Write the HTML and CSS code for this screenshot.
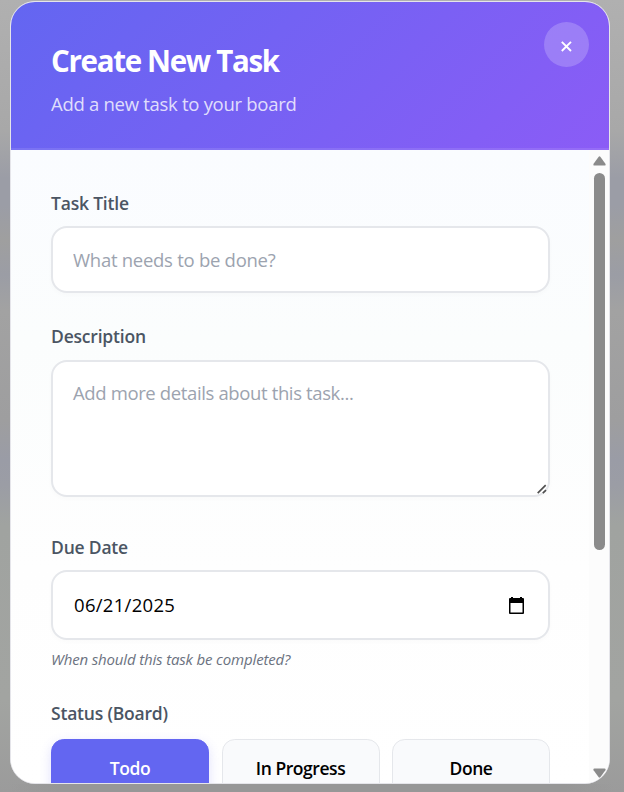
FILE: index.html
```html
<!DOCTYPE html>
<html lang="en">
<head>
<meta charset="utf-8">
<title>Create New Task</title>
<link rel="stylesheet" href="styles.css">
</head>
<body>
<section class="modal">
  <header class="modal-header">
    <div>
      <h1 class="modal-title">Create New Task</h1>
      <p class="modal-subtitle">Add a new task to your board</p>
    </div>
    <button class="close" type="button" aria-label="Close">
      <svg width="11" height="11" viewBox="0 0 11 11"><path d="M.8.8l9.200 9.200M10 .8L.8 10" fill="none" stroke="#fff" stroke-width="1.9"/></svg>
    </button>
  </header>
  <div class="modal-body">
    <form class="form">
      <div class="field title-field">
        <label class="label" for="title">Task Title</label>
        <input class="control" id="title" type="text" placeholder="What needs to be done?">
      </div>
      <div class="field description-field">
        <label class="label label-tight" for="description">Description</label>
        <div class="area">
          <textarea class="control control-area" id="description" placeholder="Add more details about this task..."></textarea>
          <svg class="grip" width="10" height="10" viewBox="0 0 10 10"><path d="M.7 9.2L8.7 1.2M5.8 9.2L9 6.2" fill="none" stroke="#505050" stroke-width="1.7"/></svg>
        </div>
      </div>
      <div class="field date-field">
        <span class="label">Due Date</span>
        <div class="control control-date">
          <span class="date-value">06/21/2025</span>
          <svg width="15" height="17" viewBox="0 0 15 17"><path d="M2 0h2v1h7V0h2v1h1q1 0 1 1v14q0 1-1 1H1q-1 0-1-1V2q0-1 1-1h1zM1.500 6v9.500h12V6z" fill="#000" fill-rule="evenodd"/></svg>
        </div>
        <p class="hint">When should this task be completed?</p>
      </div>
      <div class="field">
        <span class="label label-tight status-label">Status (Board)</span>
        <div class="statuses">
          <button class="status active" type="button">Todo</button>
          <button class="status status-progress" type="button">In Progress</button>
          <button class="status" type="button">Done</button>
        </div>
      </div>
    </form>
    <div class="scrollbar">
      <svg width="13" height="10" viewBox="0 0 13 10"><path d="M5.5.9q1-1.2 2 0l4.9 6.8Q13.100 9.500 11.500 9.500H1.500Q-.1 9.500.6 7.700z" fill="#8b8b8b"/></svg>
      <div class="thumb"></div>
      <svg class="down" width="13" height="10" viewBox="0 0 13 10"><path d="M5.500 9.100q1 1.200 2 0l4.900-6.800Q13.100.5 11.500.5H1.500Q-.1.5.6 2.300z" fill="#8b8b8b"/></svg>
    </div>
  </div>
</section>
</body>
</html>
```
FILE: styles.css
```css
* { box-sizing: border-box; }
html, body { height: 100%; margin: 0; }
body {
  overflow: hidden;
  padding: 1px 14px 8px 10px;
  font-family: "Open Sans", "Noto Sans", sans-serif;
  background:
    linear-gradient(90deg, transparent 10px, #979797 60px, #979797 564px, transparent 614px) 0 784px / 100% 8px no-repeat,
    linear-gradient(180deg, #b0b0b0 0, #a8a8a8 130px, #9b9da6 178px, #9b9da6 205px, #9f9f9f 240px, #9b9da5 275px, #a2a2a2 310px, #9e9e9f 420px, #9a9ca6 460px, #9b9da5 485px, #a0a3a0 525px, #a2a4a1 700px, #9b9b9b 792px);
}
h1, p { margin: 0; }
button, input, textarea { font: inherit; }
.modal {
  display: flex;
  flex-direction: column;
  width: 600px;
  height: 783px;
  border: 1px solid #e5e5ea;
  border-radius: 25px;
  overflow: hidden;
  background: #fff;
}
.modal-header {
  display: flex;
  justify-content: space-between;
  height: 148px;
  flex: none;
  padding: 39px 20px 0 40px;
  border-bottom: 2px solid rgba(255, 255, 255, .1);
  background: linear-gradient(135deg, #6366f1, #8b5cf6) border-box;
  color: #fff;
}
.modal-title {
  font-size: 29.5px;
  line-height: 40px;
  font-weight: 700;
  letter-spacing: -1.32px;
}
.modal-subtitle {
  margin-top: 10px;
  font-size: 18.5px;
  line-height: 25px;
  letter-spacing: -.29px;
  color: rgba(255, 255, 255, .8);
}
.close {
  display: grid;
  place-items: center;
  width: 45px;
  height: 45px;
  margin-top: -19px;
  padding: 4px 0 0;
  border: 0;
  border-radius: 50%;
  background: rgba(255, 255, 255, .2);
}
.modal-body {
  display: flex;
  height: 633px;
  overflow: hidden;
  background: linear-gradient(180deg, #fafcff 0, #fbfdfd 190px, #fefefe 420px, #fff 100%);
}
.form {
  display: flex;
  flex-direction: column;
  width: 578px;
  flex: none;
  padding: 40px 0 0 40px;
}
.field { display: flex; flex-direction: column; flex: none; }
.title-field { height: 134px; }
.description-field { height: 210px; }
.date-field { height: 167px; }
.label {
  height: 36px;
  font-size: 17.5px;
  line-height: 27px;
  font-weight: 600;
  letter-spacing: -.2px;
  color: #4b5563;
}
.label-tight { line-height: 25px; }
.status-label { height: 38px; }
.control {
  display: block;
  width: 499px;
  height: 67px;
  padding: 0 20px;
  border: 2px solid #e5e7eb;
  border-radius: 16px;
  outline: 0;
  background: #fff;
  color: #000;
  font-size: 18.5px;
  box-shadow: 0 2px 5px rgba(0, 0, 0, .02);
}
.control::placeholder { color: #9ca3af; opacity: 1; letter-spacing: -.27px; }
.area { position: relative; width: 499px; }
.control-area {
  height: 137px;
  padding-top: 18px;
  line-height: 26px;
  resize: none;
}
.control-area::placeholder { letter-spacing: -.37px; }
.grip { position: absolute; right: 3px; bottom: 3px; }
.control-date {
  display: flex;
  align-items: center;
  justify-content: space-between;
  height: 70px;
  padding: 0 24px 0 21px;
  letter-spacing: .3px;
}
.date-value { padding-bottom: 2px; }
.hint {
  margin-top: 9px;
  font-size: 15px;
  line-height: 20px;
  font-style: italic;
  letter-spacing: -.15px;
  color: #6b7280;
}
.statuses {
  display: grid;
  grid-template-columns: repeat(3, 158px);
  justify-content: space-between;
  width: 499px;
}
.status {
  height: 60px;
  padding: 0 0 3px;
  border: 1px solid #e5e7eb;
  border-radius: 12.8px;
  background: #f9fafc;
  color: #000;
  font-size: 17.5px;
  font-weight: 600;
  letter-spacing: -.45px;
}
.active {
  border-color: #6366f1;
  background: #6366f1;
  color: #fff;
  box-shadow: 0 4px 12px rgba(99, 102, 241, .2);
}
.scrollbar {
  display: flex;
  flex-direction: column;
  align-items: center;
  width: 20px;
  padding: 6px 0 5px 1px;
  background: #fcfcfc;
}
.thumb {
  width: 11px;
  height: 377px;
  margin-top: 7px;
  border-radius: 6px;
  background: #8b8b8b;
}
.down { margin-top: auto; }
```
